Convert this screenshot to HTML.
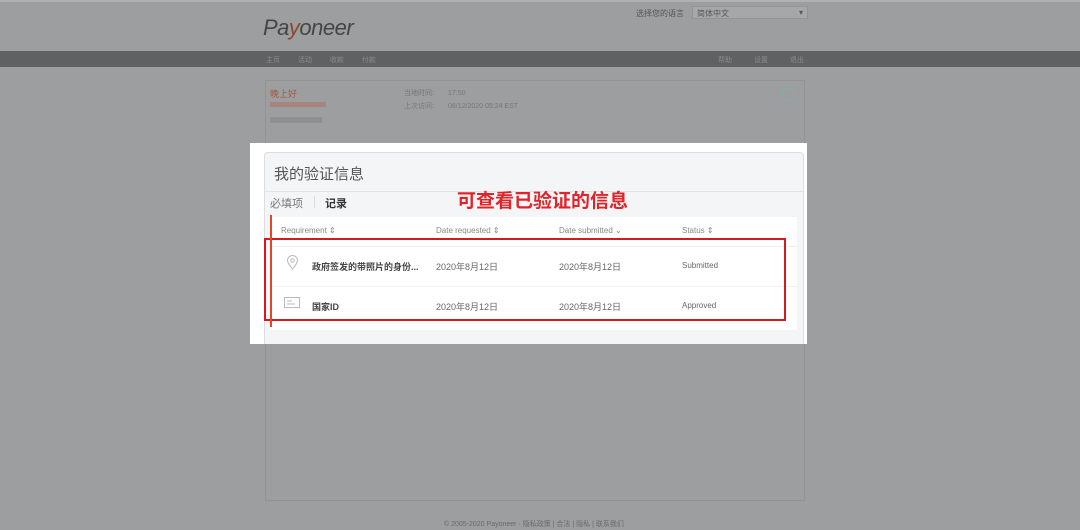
<!DOCTYPE html>
<html><head><meta charset="utf-8"><style>
*{margin:0;padding:0;box-sizing:border-box}
body{width:1080px;height:530px;background:#9d9e9f;font-family:"Liberation Sans","Noto Sans CJK SC",sans-serif;position:relative;overflow:hidden;color:#555}
.a{position:absolute}
</style></head><body>
<div class="a" style="left:0;top:0;width:1080px;height:2px;background:#b0b1b2"></div>
<div class="a" style="left:263px;top:15px;font-size:22px;font-style:italic;color:#454545;letter-spacing:-0.5px">Pa<span style="color:#8a4a30">y</span>oneer</div>
<div class="a" style="left:636px;top:8px;font-size:8px;color:#555">选择您的语言</div>
<div class="a" style="left:692px;top:6px;width:116px;height:13px;background:#a6a7a8;border:1px solid #939495;font-size:8px;padding:1px 4px;color:#555">简体中文<span style="float:right">▾</span></div>
<div class="a" style="left:0;top:51px;width:1080px;height:16px;background:#606162"></div>
<div class="a" style="left:266px;top:55px;font-size:7px;color:#8c8c8c;word-spacing:16px">主页 活动 收款 付款</div>
<div class="a" style="left:718px;top:55px;font-size:7px;color:#8c8c8c;word-spacing:20px">帮助 设置 退出</div>
<div class="a" style="left:265px;top:80px;width:540px;height:421px;border:1px solid #929394"></div>
<div class="a" style="left:270px;top:87px;font-size:9px;color:#a05a45">晚上好</div>
<div class="a" style="left:270px;top:102px;width:56px;height:5px;background:#a8857c"></div>
<div class="a" style="left:270px;top:117px;width:52px;height:6px;background:#8f8f8f"></div>
<div class="a" style="left:404px;top:87px;font-size:7px;color:#777;line-height:13px">当地时间:<br>上次访问:</div>
<div class="a" style="left:448px;top:87px;font-size:7px;color:#777;line-height:13px">17:50<br>08/12/2020 05:24 EST</div>
<div class="a" style="left:782px;top:88px;width:12px;height:12px;border:1px solid #8aa;border-radius:2px"></div>
<div class="a" style="left:250px;top:143px;width:557px;height:201px;background:#fff"></div>
<div class="a" style="left:264px;top:152px;width:540px;height:192px;background:#f4f5f6;border:1px solid #dcdde0;border-bottom:none;border-radius:4px 4px 0 0"></div>
<div class="a" style="left:274px;top:163px;font-size:15px;color:#555">我的验证信息</div>
<div class="a" style="left:265px;top:191px;width:538px;height:1px;background:#e2e3e5"></div>
<div class="a" style="left:270px;top:195px;font-size:11px;color:#777">必填项</div>
<div class="a" style="left:314px;top:196px;width:1px;height:12px;background:#ddd"></div>
<div class="a" style="left:325px;top:195px;font-size:11px;color:#333;font-weight:bold">记录</div>
<div class="a" style="left:457px;top:186px;font-size:19px;color:#e0242a;font-weight:bold">可查看已验证的信息</div>
<div class="a" style="left:270px;top:217px;width:527px;height:113px;background:#fff"></div>
<div class="a" style="left:281px;top:226px;font-size:8px;color:#888">Requirement ⇕</div>
<div class="a" style="left:436px;top:226px;font-size:8px;color:#888">Date requested ⇕</div>
<div class="a" style="left:559px;top:226px;font-size:8px;color:#888">Date submitted ⌄</div>
<div class="a" style="left:682px;top:226px;font-size:8px;color:#888">Status ⇕</div>
<div class="a" style="left:270px;top:246px;width:527px;height:1px;background:#eee"></div>
<div class="a" style="left:270px;top:286px;width:527px;height:1px;background:#f1f1f1"></div>
<svg class="a" style="left:286px;top:255px" width="13" height="15" viewBox="0 0 13 15"><path d="M6.5 14C3 9.5 1.5 7.5 1.5 5.5a5 5 0 0 1 10 0c0 2-1.5 4-5 8.5z" fill="none" stroke="#bbb"/><circle cx="6.5" cy="5.5" r="1.8" fill="none" stroke="#bbb"/></svg>
<svg class="a" style="left:284px;top:297px" width="16" height="11"><rect x="0.5" y="0.5" width="15" height="10" fill="none" stroke="#bbb"/><path d="M3 4h5M3 7h8" stroke="#bbb"/></svg>
<div class="a" style="left:312px;top:260px;font-size:9px;color:#444;font-weight:bold">政府签发的带照片的身份...</div>
<div class="a" style="left:312px;top:300px;font-size:9px;color:#444;font-weight:bold">国家ID</div>
<div class="a" style="left:436px;top:260px;font-size:9px;color:#666">2020年8月12日</div>
<div class="a" style="left:436px;top:300px;font-size:9px;color:#666">2020年8月12日</div>
<div class="a" style="left:559px;top:260px;font-size:9px;color:#666">2020年8月12日</div>
<div class="a" style="left:559px;top:300px;font-size:9px;color:#666">2020年8月12日</div>
<div class="a" style="left:682px;top:261px;font-size:8px;color:#666">Submitted</div>
<div class="a" style="left:682px;top:301px;font-size:8px;color:#666">Approved</div>
<div class="a" style="left:264px;top:238px;width:522px;height:83px;border:2px solid #d4191f"></div>
<div class="a" style="left:270px;top:215px;width:2px;height:112px;background:#e4452a"></div>
<div class="a" style="left:444px;top:519px;font-size:7px;color:#6a6a6a">© 2005-2020 Payoneer · 隐私政策 | 合法 | 隐私 | 联系我们</div>
</body></html>
